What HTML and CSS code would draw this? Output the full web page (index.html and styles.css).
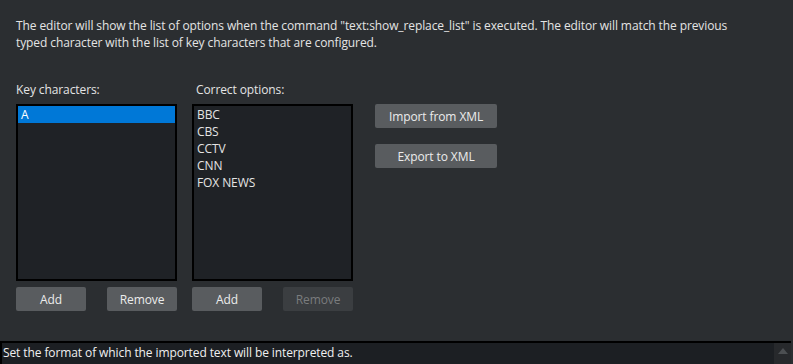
FILE: index.html
```html
<!DOCTYPE html>
<html lang="en">
  <head>
    <meta charset="UTF-8" />
    <title>Replace List</title>
    <link rel="stylesheet" href="styles.css">
  </head>
  <body>
    <div class="page">
      <p class="intro">
        The editor will show the list of options when the command "text:show_replace_list" is executed. The editor will match the previous<br />
        typed character with the list of key characters that are configured.
      </p>
      <div class="editor">
        <div class="column">
          <label class="caption">Key characters:</label>
          <ul class="list">
            <li class="selected">A</li>
          </ul>
          <div class="actions">
            <button class="btn">Add</button>
            <button class="btn">Remove</button>
          </div>
        </div>
        <div class="column">
          <label class="caption">Correct options:</label>
          <ul class="list">
            <li>BBC</li>
            <li>CBS</li>
            <li>CCTV</li>
            <li>CNN</li>
            <li>FOX NEWS</li>
          </ul>
          <div class="actions">
            <button class="btn">Add</button>
            <button class="btn" disabled>Remove</button>
          </div>
        </div>
        <div class="side">
          <button class="btn wide">Import from XML</button>
          <button class="btn wide">Export to XML</button>
        </div>
      </div>
    </div>
    <div class="status">
      <span class="status__text">Set the format of which the imported text will be interpreted as.</span>
      <span class="status__scroll"><span class="arrow"></span></span>
    </div>
  </body>
</html>
```
FILE: styles.css
```css
* {
  margin: 0;
  padding: 0;
  box-sizing: border-box;
}

body {
  width: 793px;
  height: 364px;
  overflow: hidden;
  display: flex;
  flex-direction: column;
  background: #2b2e31;
  color: #e4e4e4;
  font-family: "Open Sans", sans-serif;
  font-size: 12px;
  letter-spacing: -0.1px;
}

.page {
  flex: 1;
  padding: 17px 16px 0;
}

.intro {
  line-height: 17px;
}

.editor {
  display: flex;
  margin-top: 30px;
}

.column {
  width: 161px;
  margin-right: 15px;
  display: flex;
  flex-direction: column;
}

.caption {
  display: block;
  height: 23px;
  line-height: 17px;
}

.column + .column .caption {
  padding-left: 4px;
}

.list {
  list-style: none;
  height: 177px;
  border: 2px solid #000;
  background: #1f2226;
}

.list li {
  height: 17px;
  line-height: 17px;
  padding-left: 3px;
}

.list .selected {
  background: #0078d7;
  color: #fff;
}

.actions {
  display: flex;
  justify-content: space-between;
  margin-top: 6px;
}

.btn {
  width: 70px;
  height: 24px;
  border: none;
  border-radius: 2px;
  background: #595c5f;
  color: #ececec;
  font-family: "Open Sans", sans-serif;
  font-size: 12px;
  letter-spacing: -0.1px;
}

.btn:disabled {
  background: #3b3e41;
  color: #7a7c7e;
}

.side {
  display: flex;
  flex-direction: column;
  gap: 16px;
  margin-left: 7px;
  padding-top: 23px;
}

.btn.wide {
  width: 122px;
}

.status {
  height: 23px;
  display: flex;
  border-top: 2px solid #000;
  border-left: 2px solid #000;
  margin-right: 2px;
  background: #1c1f23;
}

.status__text {
  flex: 1;
  padding-left: 1px;
  line-height: 20px;
  color: #f0f0f0;
}

.status__scroll {
  width: 17px;
  background: #27292c;
  display: flex;
  justify-content: center;
  padding-top: 5px;
}

.arrow {
  width: 0;
  height: 0;
  border-left: 5px solid transparent;
  border-right: 5px solid transparent;
  border-bottom: 6px solid #4c4f52;
}
```
